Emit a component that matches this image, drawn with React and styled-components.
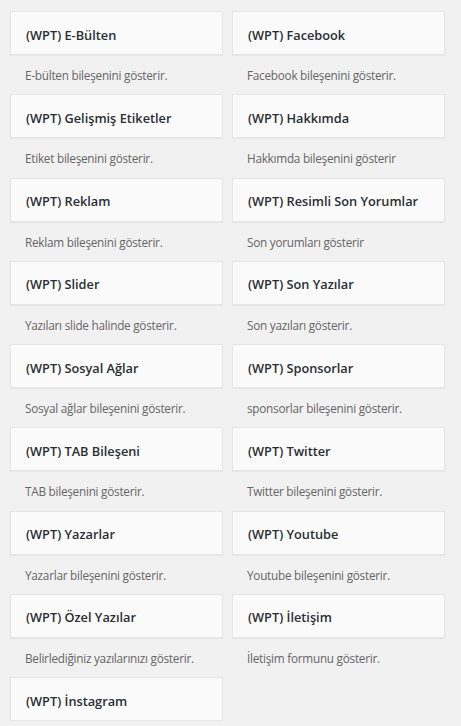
import React from 'react';
import styled, { createGlobalStyle } from 'styled-components';

const GlobalStyle = createGlobalStyle`
  html, body {
    margin: 0;
    padding: 0;
    background: #f1f1f1;
  }
  body {
    font-family: "Open Sans", "Liberation Sans", sans-serif;
  }
`;

const WidgetList = styled.div`
  display: grid;
  grid-template-columns: 213px 213px;
  align-content: start;
  column-gap: 9px;
  padding: 11px 16px 0 10px;
`;

const Widget = styled.div`
  display: flex;
  flex-direction: column;
`;

const WidgetTop = styled.div`
  height: 44px;
  box-sizing: border-box;
  display: flex;
  align-items: center;
  padding: 3px 15px 0;
  background: #fafafa;
  border: 1px solid #e5e5e5;
  box-shadow: 0 1px 1px rgba(0, 0, 0, 0.04);
`;

const WidgetTitle = styled.h3`
  margin: 0;
  font-size: 12.75px;
  font-weight: 600;
  color: #2a2e33;
  white-space: nowrap;
`;

const WidgetDesc = styled.p`
  margin: 0;
  height: 39.25px;
  box-sizing: border-box;
  display: flex;
  align-items: center;
  padding: 1px 15px 0;
  font-size: 11.75px;
  letter-spacing: -0.25px;
  color: #666;
  white-space: nowrap;
`;

const widgets = [
  { title: '(WPT) E-Bülten', desc: 'E-bülten bileşenini gösterir.' },
  { title: '(WPT) Facebook', desc: 'Facebook bileşenini gösterir.' },
  { title: '(WPT) Gelişmiş Etiketler', desc: 'Etiket bileşenini gösterir.' },
  { title: '(WPT) Hakkımda', desc: 'Hakkımda bileşenini gösterir' },
  { title: '(WPT) Reklam', desc: 'Reklam bileşenini gösterir.' },
  { title: '(WPT) Resimli Son Yorumlar', desc: 'Son yorumları gösterir' },
  { title: '(WPT) Slider', desc: 'Yazıları slide halinde gösterir.' },
  { title: '(WPT) Son Yazılar', desc: 'Son yazıları gösterir.' },
  { title: '(WPT) Sosyal Ağlar', desc: 'Sosyal ağlar bileşenini gösterir.' },
  { title: '(WPT) Sponsorlar', desc: 'sponsorlar bileşenini gösterir.' },
  { title: '(WPT) TAB Bileşeni', desc: 'TAB bileşenini gösterir.' },
  { title: '(WPT) Twitter', desc: 'Twitter bileşenini gösterir.' },
  { title: '(WPT) Yazarlar', desc: 'Yazarlar bileşenini gösterir.' },
  { title: '(WPT) Youtube', desc: 'Youtube bileşenini gösterir.' },
  { title: '(WPT) Özel Yazılar', desc: 'Belirlediğiniz yazılarınızı gösterir.' },
  { title: '(WPT) İletişim', desc: 'İletişim formunu gösterir.' },
  { title: '(WPT) İnstagram', desc: '' },
];

export default function App() {
  return (
    <>
      <GlobalStyle />
      <WidgetList>
        {widgets.map((w) => (
          <Widget key={w.title}>
            <WidgetTop>
              <WidgetTitle>{w.title}</WidgetTitle>
            </WidgetTop>
            {w.desc && <WidgetDesc>{w.desc}</WidgetDesc>}
          </Widget>
        ))}
      </WidgetList>
    </>
  );
}
